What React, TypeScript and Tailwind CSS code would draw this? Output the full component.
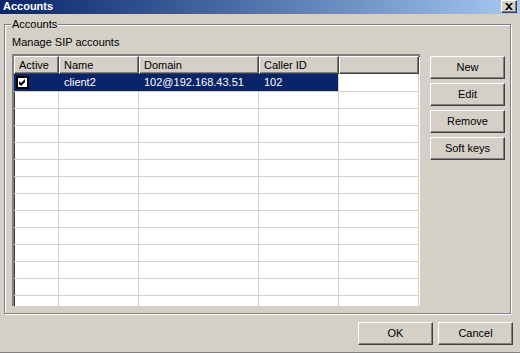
import React from "react";

const columns = [
  { label: "Active", w: 45 },
  { label: "Name", w: 80 },
  { label: "Domain", w: 120 },
  { label: "Caller ID", w: 80 },
  { label: "", w: 80 },
];

const accounts = [
  { active: true, name: "client2", domain: "102@192.168.43.51", callerId: "102" },
];

function CheckBox() {
  return (
    <svg width="13" height="13" viewBox="0 0 13 13">
      <rect x="0" y="0" width="13" height="13" fill="#000" />
      <rect x="2" y="2" width="9" height="9" fill="#fff" />
      <path d="M3 5 L5 7 L9 3 L9 6 L5 10 L3 8 Z" fill="#000" />
    </svg>
  );
}

function WinButton({ label, className = "" }: { label: string; className?: string }) {
  return (
    <button
      className={
        "w-[75px] h-[23px] bg-[#d4d0c8] border border-t-white border-l-white border-r-[#404040] border-b-[#404040] shadow-[inset_-1px_-1px_0_#808080] text-[11px] leading-[13px] text-black " +
        className
      }
    >
      {label}
    </button>
  );
}

function App() {
  const emptyRows = Array.from({ length: 13 });

  return (
    <div
      className="w-[520px] h-[353px] bg-[#d4d0c8] flex flex-col border-b border-[#808080] overflow-hidden text-black text-[11px] leading-[13px]"
      style={{ fontFamily: '"Liberation Sans", Arial, sans-serif' }}
    >
      {/* title bar */}
      <div className="h-[14px] shrink-0 flex items-start justify-between pl-[3px] pr-[3px] bg-gradient-to-r from-[#0a246a] to-[#a6caf0]">
        <span className="text-white font-bold text-[11px] leading-[13px]">Accounts</span>
        <div className="w-[16px] h-[13px] flex items-center justify-center bg-[#d4d0c8] border border-t-white border-l-white border-r-[#404040] border-b-[#404040] shadow-[inset_-1px_-1px_0_#808080]">
          <svg width="8" height="7" viewBox="0 0 8 7">
            <path d="M0 0 L2 0 L4 2 L6 0 L8 0 L5 3.5 L8 7 L6 7 L4 5 L2 7 L0 7 L3 3.5 Z" fill="#000" />
          </svg>
        </div>
      </div>

      {/* group box */}
      <div className="relative mt-[10px] ml-[4px] w-[507px] h-[290px] shrink-0 border border-[#808080] shadow-[1px_1px_0_#fff,inset_1px_1px_0_#fff]">
        <span className="absolute -top-[7px] left-[6px] px-[1px] bg-[#d4d0c8]">Accounts</span>
        <div className="pt-[11px] pl-[7px]">
          <p>Manage SIP accounts</p>
          <div className="flex mt-[5px]">
            <div className="w-[408px] h-[252px] bg-white border-l-2 border-t-2 border-l-[#808080] border-t-[#808080] shadow-[inset_1px_1px_0_#404040] overflow-hidden">
              <div className="flex h-[18px]">
                {columns.map((c) => (
                  <div
                    key={c.label || "blank"}
                    style={{ width: c.w }}
                    className="shrink-0 h-[18px] flex items-center pl-[4px] bg-[#d4d0c8] border border-t-white border-l-white border-r-[#404040] border-b-[#404040] shadow-[inset_-1px_-1px_0_#808080]"
                  >
                    {c.label}
                  </div>
                ))}
              </div>
              {accounts.map((a) => (
                <div key={a.name} className="flex h-[18px]">
                  <div style={{ width: 45 }} className="shrink-0 bg-[#0a246a] border-b border-[#d4d0c8] flex items-center pl-[2px]">
                    <CheckBox />
                  </div>
                  <div style={{ width: 80 }} className="shrink-0 bg-[#0a246a] text-white border-b border-[#d4d0c8] flex items-center pl-[5px]">
                    {a.name}
                  </div>
                  <div style={{ width: 120 }} className="shrink-0 bg-[#0a246a] text-white border-b border-[#d4d0c8] flex items-center pl-[5px]">
                    {a.domain}
                  </div>
                  <div style={{ width: 80 }} className="shrink-0 bg-[#0a246a] text-white border-b border-r border-[#d4d0c8] flex items-center pl-[5px]">
                    {a.callerId}
                  </div>
                  <div style={{ width: 80 }} className="shrink-0 border-b border-r border-[#d4d0c8]" />
                </div>
              ))}
              {emptyRows.map((_, i) => (
                <div key={i} className="flex h-[17px]">
                  {columns.map((c) => (
                    <div
                      key={c.label || "blank"}
                      style={{ width: c.w }}
                      className="shrink-0 border-b border-r border-[#d4d0c8]"
                    />
                  ))}
                </div>
              ))}
            </div>

            <div className="ml-[10px] mt-[2px] flex flex-col gap-[4px]">
              <WinButton label="New" />
              <WinButton label="Edit" />
              <WinButton label="Remove" />
              <WinButton label="Soft keys" />
            </div>
          </div>
        </div>
      </div>

      {/* dialog buttons */}
      <div className="flex justify-end gap-[5px] mt-[8px] pr-[7px]">
        <WinButton label="OK" />
        <WinButton label="Cancel" />
      </div>
    </div>
  );
}

export default App;
